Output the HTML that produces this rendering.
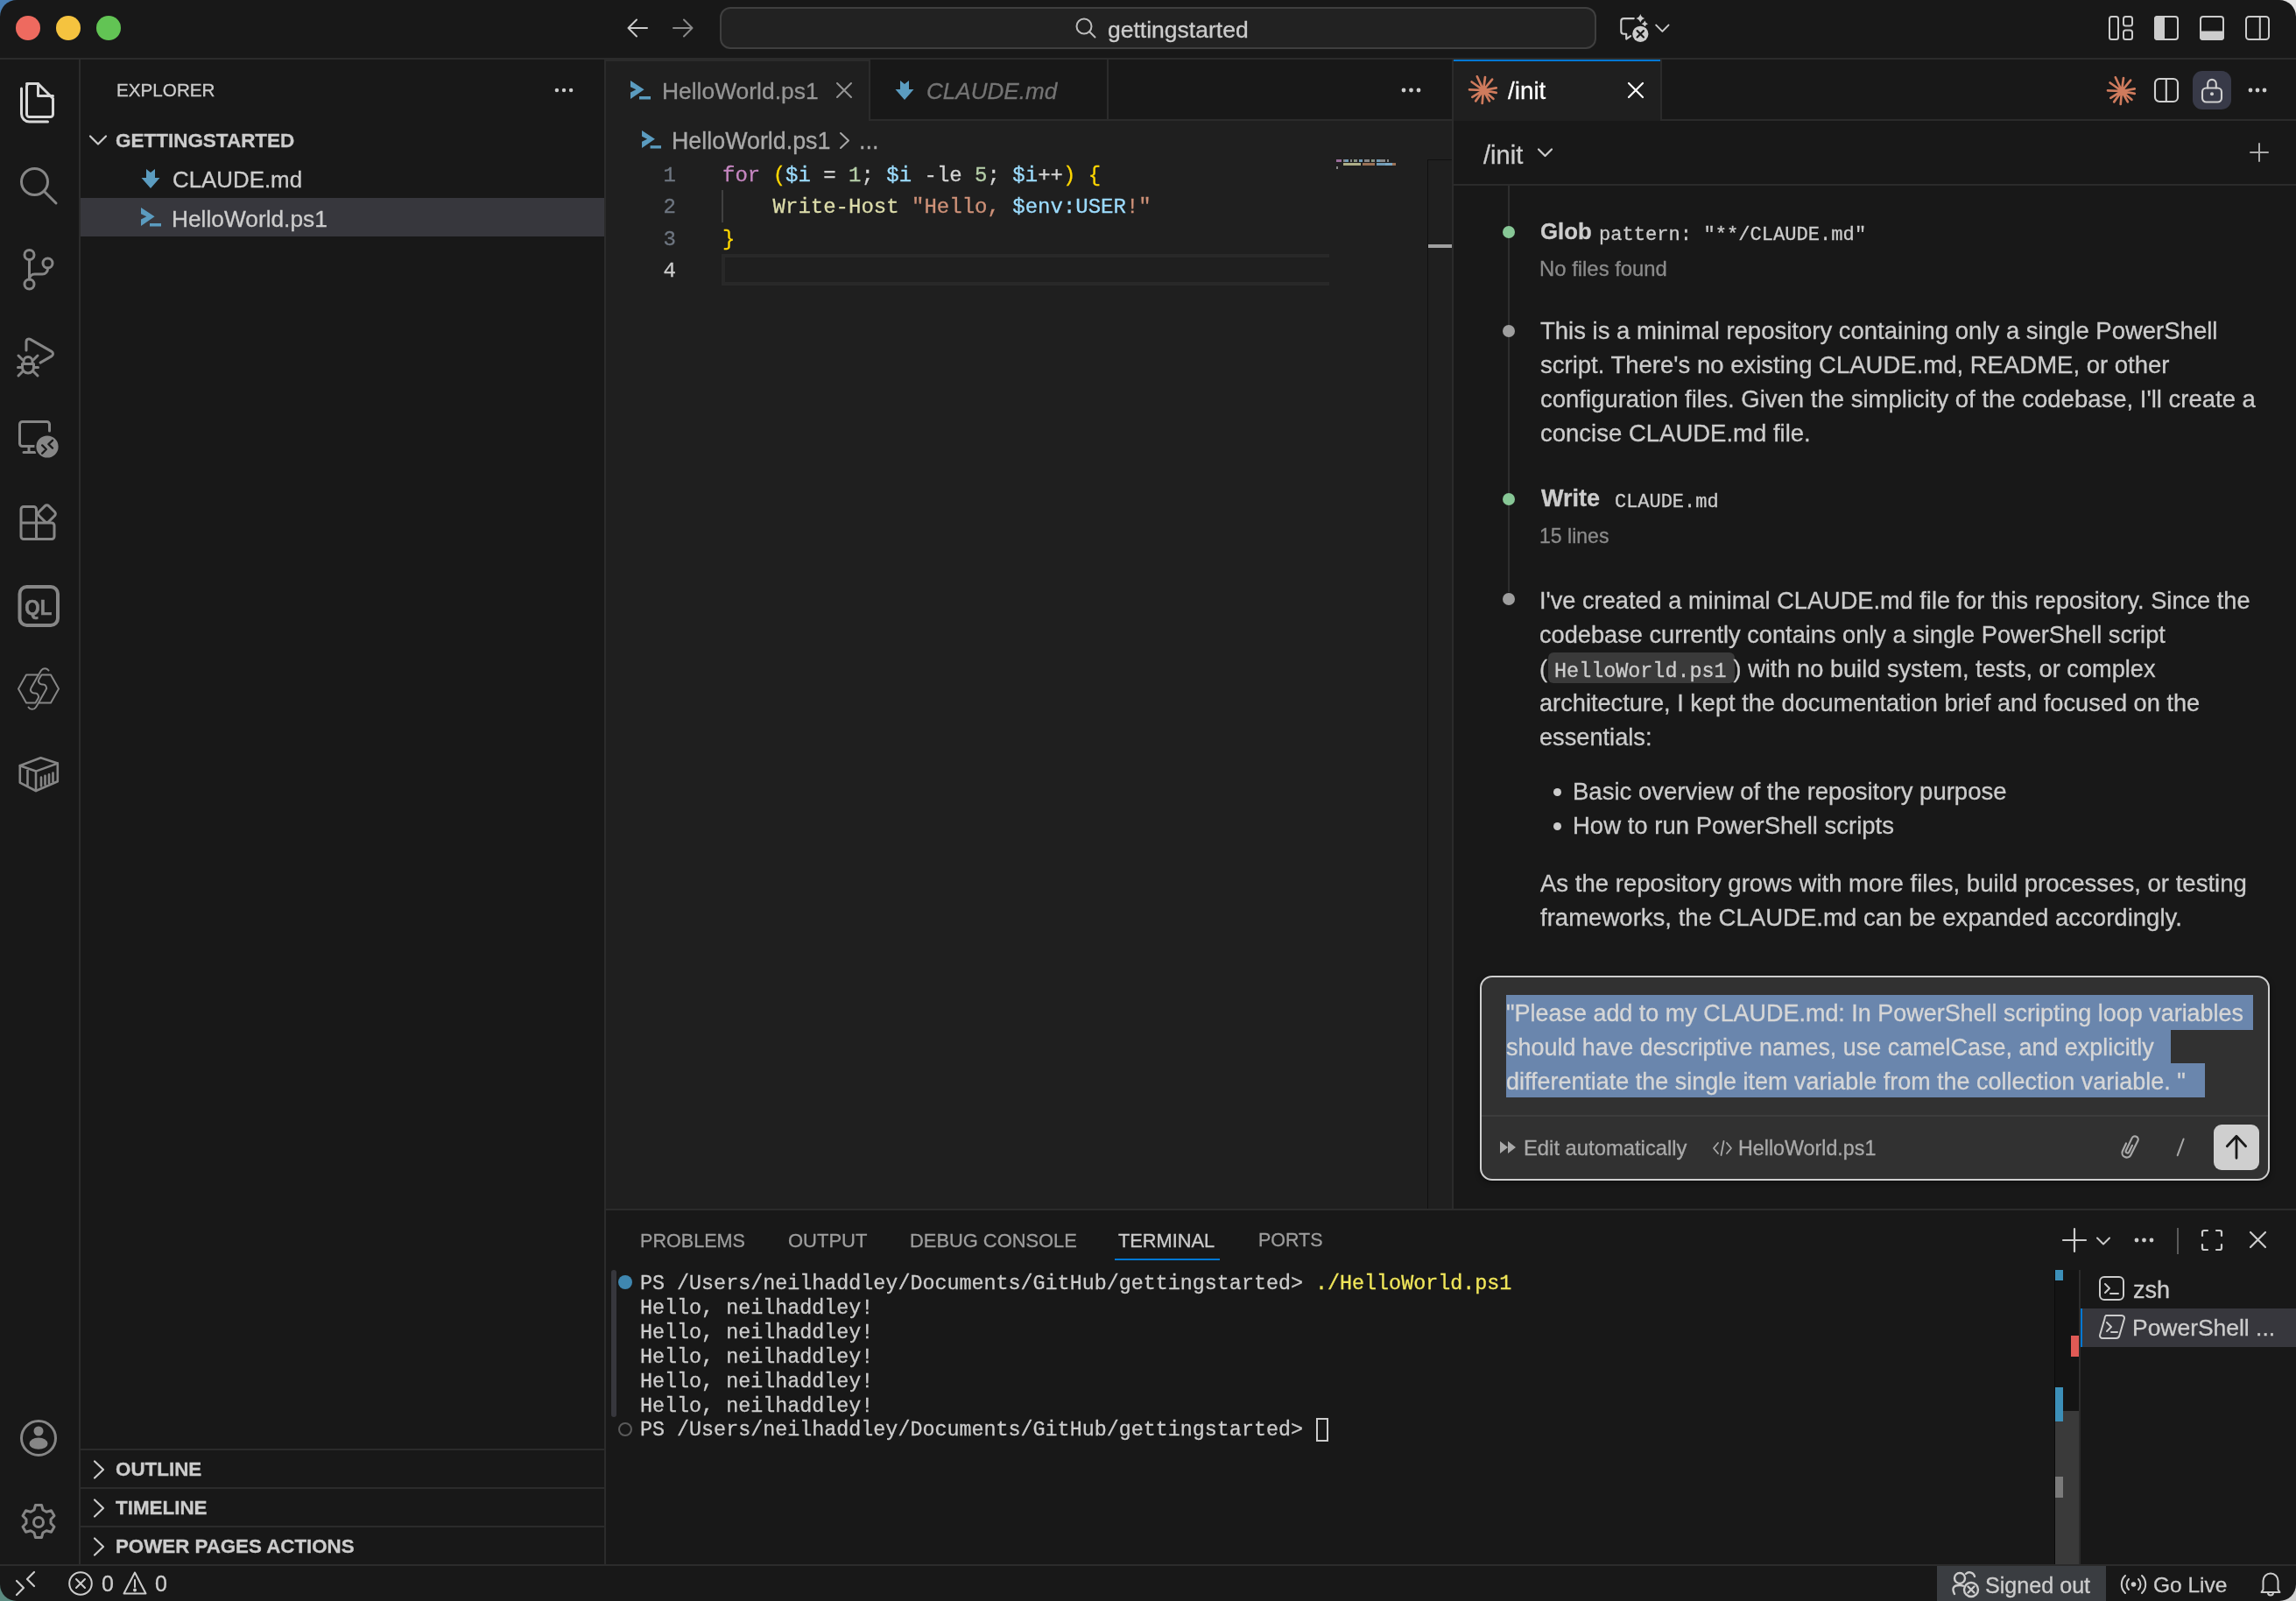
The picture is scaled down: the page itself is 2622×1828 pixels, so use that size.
<!DOCTYPE html>
<html><head><meta charset="utf-8">
<style>
*{box-sizing:border-box;margin:0;padding:0}
html,body{width:2622px;height:1828px;overflow:hidden;background:#181818}
body{position:relative;font-family:"Liberation Sans",sans-serif;color:#cccccc}
.t,#code,#term,#lnums{-webkit-text-stroke:0.3px currentColor;will-change:transform}
svg text{will-change:transform}
.a{position:absolute}
.mono{font-family:"Liberation Mono",monospace}
.t{position:absolute;white-space:pre;line-height:1}
svg.i{position:absolute;overflow:visible;fill:none;stroke-linecap:round;stroke-linejoin:round}
.b{position:absolute;background:#2b2b2b}
</style></head><body>
<!-- desktop corners -->
<div class="a" style="left:0;top:0;width:40px;height:40px;background:#4a7fb3"></div>
<div class="a" style="left:2582px;top:0;width:40px;height:40px;background:#e6e6e6"></div>
<div class="a" style="left:0;top:1788px;width:40px;height:40px;background:#5b8a80"></div>
<div class="a" style="left:2582px;top:1788px;width:40px;height:40px;background:#d2d2d2"></div>
<div class="a" style="left:0;top:0;width:2622px;height:1828px;background:#181818;border-radius:19px"></div>

<!-- ================= TITLE BAR ================= -->
<div class="b" style="left:0;top:66px;width:2622px;height:2px"></div>
<div class="a" style="left:18px;top:18px;width:28px;height:28px;border-radius:50%;background:#ee6a5f"></div>
<div class="a" style="left:64px;top:18px;width:28px;height:28px;border-radius:50%;background:#f5c33f"></div>
<div class="a" style="left:110px;top:18px;width:28px;height:28px;border-radius:50%;background:#62c454"></div>

<div id="title-icons">
<svg class="i" style="left:716px;top:21px" width="24" height="22" viewBox="0 0 24 22" stroke="#cccccc" stroke-width="2"><path d="M1.5 11H23M11 1.5L1.5 11L11 20.5"/></svg>
<svg class="i" style="left:768px;top:21px" width="24" height="22" viewBox="0 0 24 22" stroke="#8a8a8a" stroke-width="2"><path d="M22.5 11H1M13 1.5L22.5 11L13 20.5"/></svg>
</div>

<div class="a" style="left:822px;top:8px;width:1001px;height:48px;border:2px solid #3f3f3f;border-radius:12px;background:#222222"></div>
<svg class="i" style="left:1228px;top:20px" width="24" height="24" viewBox="0 0 24 24" stroke="#bdbdbd" stroke-width="2"><circle cx="10" cy="10" r="8.5"/><path d="M16.2 16.2L22.5 22.5"/></svg>
<div class="t" id="t-search" style="left:1265.0px;top:20.5px;font-size:26.53px;color:#cccccc">gettingstarted</div>

<!-- copilot icon -->
<svg class="i" style="left:1840px;top:8px" width="80" height="50" viewBox="0 0 80 50">
<path d="M25.8 13.1H14.3a3 3 0 0 0-3 3v11.6a3 3 0 0 0 3 3h2.9v5.9l5-3.4" stroke="#cccccc" stroke-width="2.1" fill="none" stroke-linecap="round" stroke-linejoin="round"/>
<path d="M33.3 7.9Q34.4 11.8 38.2 12.9Q34.4 14 33.3 17.8Q32.2 14 28.4 12.9Q32.2 11.8 33.3 7.9z" fill="#cccccc"/>
<path d="M38.3 15.6Q39.1 18.5 42 19.3Q39.1 20.1 38.3 23Q37.5 20.1 34.6 19.3Q37.5 18.5 38.3 15.6z" fill="#cccccc"/>
<circle cx="33.3" cy="30.8" r="10.4" fill="#181818"/>
<circle cx="33.3" cy="30.8" r="9.1" fill="#cccccc"/>
<path d="M29.6 27.1l7.4 7.4M37 27.1l-7.4 7.4" stroke="#181818" stroke-width="2.2" stroke-linecap="round"/>
<path d="M51.2 20.6l7.2 7.3 7.1-7.3" stroke="#cccccc" stroke-width="2" fill="none" stroke-linecap="round" stroke-linejoin="round"/>
</svg>
<!-- layout icons -->
<svg class="i" style="left:2408px;top:18px" width="28" height="28" viewBox="0 0 28 28" stroke="#cccccc" stroke-width="2"><rect x="1" y="1" width="10" height="26" rx="2.5"/><rect x="17" y="1" width="10" height="10.5" rx="2.5"/><rect x="17" y="16.5" width="10" height="10.5" rx="2.5"/></svg>
<svg class="i" style="left:2460px;top:18px" width="28" height="28" viewBox="0 0 28 28" stroke="#cccccc" stroke-width="2"><rect x="1" y="1" width="26" height="26" rx="3"/><path d="M4 0h8v28H4a4 4 0 0 1-4-4V4a4 4 0 0 1 4-4z" fill="#cccccc" stroke="none"/></svg>
<svg class="i" style="left:2512px;top:18px" width="28" height="28" viewBox="0 0 28 28" stroke="#cccccc" stroke-width="2"><rect x="1" y="1" width="26" height="26" rx="3"/><path d="M0 17.5h28v6.5a4 4 0 0 1-4 4H4a4 4 0 0 1-4-4z" fill="#cccccc" stroke="none"/></svg>
<svg class="i" style="left:2564px;top:18px" width="28" height="28" viewBox="0 0 28 28" stroke="#cccccc" stroke-width="2"><rect x="1" y="1" width="26" height="26" rx="3.5"/><path d="M16.8 1v26"/></svg>

<!-- ================= ACTIVITY BAR ================= -->
<div class="b" style="left:90px;top:68px;width:2px;height:1718px"></div>
<svg class="i" style="left:0;top:0" width="92" height="1786" viewBox="0 0 92 1786" stroke-width="3">
<g stroke="#d7d7d7">
<path d="M30.5 95.5h13l17 17v18a3 3 0 0 1-3 3h-24a3 3 0 0 1-3-3v-32a3 3 0 0 1 3-3z"/>
<path d="M43.5 95.5v14h17"/>
<path d="M24.5 101v29a9 9 0 0 0 9 9h21"/>
</g>
<g stroke="#868686">
<circle cx="39.5" cy="207.5" r="15"/><path d="M50.5 218.5l13.5 13.5"/>
<circle cx="33.5" cy="291" r="5.5"/><circle cx="54.5" cy="300.5" r="5.5"/><circle cx="33.5" cy="324.5" r="5.5"/>
<path d="M33.5 296.5v22.5M54.5 306v1a6 6 0 0 1-6 6h-9a6 6 0 0 0-6 6"/>
<path d="M30 400v-10a3 3 0 0 1 4.5-2.6l24.5 14a3 3 0 0 1 0 5.2l-13 7.5"/>
<path d="M27 412.5a5 5 0 0 1 10 0v3h-10zM25.5 415.5h13v4a6.5 6.5 0 0 1-13 0z"/>
<path d="M21 406l4.5 4.5M43 406l-4.5 4.5M20.5 419.5h5M38.5 419.5h5M21 429l4.5-4.5M43 429l-4.5-4.5"/>
<path d="M56.5 492v-7.5a3 3 0 0 0-3-3h-28a3 3 0 0 0-3 3v22a3 3 0 0 0 3 3h14M33 510v6.5M27 516.5h13"/>
<path d="M27 578.5h11.5a3 3 0 0 1 3 3v15.5h-17.5v-15.5a3 3 0 0 1 3-3zM24 597h35a3 3 0 0 1 3 3v12.5a3 3 0 0 1-3 3H27a3 3 0 0 1-3-3zM41.5 597v18.5"/>
<path d="M51.4 577.6a3 3 0 0 1 4.2 0l6.9 6.9a3 3 0 0 1 0 4.2l-6.9 6.9a3 3 0 0 1-4.2 0l-6.9-6.9a3 3 0 0 1 0-4.2z"/>
</g>
<circle cx="54" cy="510" r="13.6" fill="#868686" stroke="#181818" stroke-width="2"/>
<path d="M48.2 508.4l4.6 4.6-4.6 4.6M60 502.8l-4.6 4.4 4.6 4.4" stroke="#181818" stroke-width="2.3" fill="none"/>
<g stroke="#868686">
<rect x="22.5" y="670" width="43.5" height="44" rx="8" stroke-width="4"/>
</g>
<text x="43.8" y="702" text-anchor="middle" font-family="Liberation Sans" font-weight="bold" font-size="24.5" fill="#868686" stroke="#868686" stroke-width="0.6" textLength="31" lengthAdjust="spacingAndGlyphs">QL</text>
<g stroke="#868686" stroke-width="2">
<path d="M30 770.5h14l-8.5 15a4 4 0 0 0 3.5 6h1a4 4 0 0 1 3.5 6l-3 5H30l-9-16z"/>
<path d="M58 802.5H44l8.5-15a4 4 0 0 0-3.5-6h-1a4 4 0 0 1-3.5-6l3-5H58l9 16z"/>
<path d="M44 770.5l3-5a5 5 0 0 1 8.5 0M44 802.5l-3 5a5 5 0 0 1-8.5 0"/>
</g>
<g stroke="#868686" stroke-width="2.6">
<path d="M22.8 874.2L46.5 865.2L65.8 871.6V892.2L41 903L22.8 893.6Z"/>
<path d="M22.8 874.2L41 880.6L65.8 871.6M41 880.6V903M31.5 877.5V897.8M47 887.5V897.5M51.5 885.8V895.8M56 884.2V894.2M60.5 882.5V892.5"/>
</g>
<g stroke="#868686" stroke-width="3">
<circle cx="44" cy="1642" r="19.5"/>
</g>
<circle cx="44" cy="1634" r="5.5" fill="#868686"/>
<path d="M33.5 1648.5a10.5 7 0 0 1 21 0 10.5 6.2 0 0 1-21 0z" fill="#868686"/>
<g stroke="#868686" stroke-width="3">
<path d="M40.5 1718.5h7l1.5 5.5 4 2.3 5.5-1.5 3.5 6-4 4v4.4l4 4-3.5 6-5.5-1.5-4 2.3-1.5 5.5h-7l-1.5-5.5-4-2.3-5.5 1.5-3.5-6 4-4v-4.4l-4-4 3.5-6 5.5 1.5 4-2.3z"/>
<circle cx="44" cy="1738" r="5.5"/>
</g>
</svg>

<!-- ================= SIDEBAR ================= -->
<div class="b" style="left:690px;top:68px;width:2px;height:1718px"></div>
<div class="t" id="t-explorer" style="left:133.1px;top:92.8px;font-size:20.66px;color:#cccccc">EXPLORER</div>
<svg class="i" style="left:630px;top:99px" width="30" height="8" viewBox="0 0 30 8"><circle cx="5.9" cy="4" r="2.2" fill="#cccccc"/><circle cx="14" cy="4" r="2.2" fill="#cccccc"/><circle cx="22.1" cy="4" r="2.2" fill="#cccccc"/></svg>
<svg class="i" style="left:102px;top:154px" width="20" height="12" viewBox="0 0 20 12" stroke="#cccccc" stroke-width="2.2"><path d="M1 1.5l9 9 9-9"/></svg>
<div class="t" id="t-gs" style="left:132.0px;top:149.7px;font-size:22.47px;font-weight:bold;color:#cccccc">GETTINGSTARTED</div>
<svg class="i" style="left:161px;top:192px" width="22" height="24" viewBox="0 0 22 24"><path d="M6 1l5 4 5-4v10h5.5L11 23 .5 11H6z" fill="#5b9cc0"/></svg>
<div class="t" id="t-claude" style="left:196.8px;top:192.8px;font-size:25.86px;color:#cccccc">CLAUDE.md</div>
<div class="a" style="left:92px;top:226px;width:598px;height:44px;background:#37373d"></div>
<svg class="i" style="left:160.6px;top:236.8px" width="24" height="22" viewBox="0 0 24 22"><path d="M0 0L15.6 10.2L0 21V13.4L6.4 10.2L0 7.2Z" fill="#5b9cc0"/><rect x="10" y="18" width="13" height="3.5" fill="#5b9cc0"/></svg>
<div class="t" id="t-hw" style="left:196.4px;top:236.8px;font-size:26.3px;color:#cccccc">HelloWorld.ps1</div>

<div class="b" style="left:92px;top:1654px;width:598px;height:2px"></div>
<div class="b" style="left:92px;top:1698px;width:598px;height:2px"></div>
<div class="b" style="left:92px;top:1742px;width:598px;height:2px"></div>
<svg class="i" style="left:106px;top:1667px" width="14" height="22" viewBox="0 0 14 22" stroke="#cccccc" stroke-width="2.2"><path d="M2 1.5l10 9.5-10 9.5"/></svg>
<svg class="i" style="left:106px;top:1711px" width="14" height="22" viewBox="0 0 14 22" stroke="#cccccc" stroke-width="2.2"><path d="M2 1.5l10 9.5-10 9.5"/></svg>
<svg class="i" style="left:106px;top:1755px" width="14" height="22" viewBox="0 0 14 22" stroke="#cccccc" stroke-width="2.2"><path d="M2 1.5l10 9.5-10 9.5"/></svg>
<div class="t" id="t-outline" style="left:132px;top:1667px;font-size:22.4px;font-weight:bold">OUTLINE</div>
<div class="t" id="t-timeline" style="left:132px;top:1711px;font-size:22.4px;font-weight:bold">TIMELINE</div>
<div class="t" id="t-ppa" style="left:132px;top:1755px;font-size:22.3px;font-weight:bold">POWER PAGES ACTIONS</div>

<!-- ================= EDITOR ================= -->
<div class="a" style="left:692px;top:138px;width:966px;height:1242px;background:#1f1f1f"></div>
<!-- tabs -->
<div class="b" style="left:692px;top:136px;width:966px;height:2px"></div>
<div class="a" style="left:692px;top:68px;width:300px;height:70px;background:#1f1f1f;border-top:2px solid #2b2b2b"></div>
<div class="b" style="left:992px;top:68px;width:2px;height:68px"></div>
<div class="b" style="left:1264px;top:68px;width:2px;height:68px"></div>
<svg class="i" style="left:720px;top:92px" width="24" height="22" viewBox="0 0 24 22"><path d="M0 0L15.6 10.2L0 21V13.4L6.4 10.2L0 7.2Z" fill="#5b9cc0"/><rect x="10" y="18" width="13" height="3.5" fill="#5b9cc0"/></svg>
<div class="t" id="t-tab1" style="left:756.0px;top:90.7px;font-size:26.42px;color:#969696">HelloWorld.ps1</div>
<svg class="i" style="left:955px;top:94px" width="18" height="18" viewBox="0 0 18 18" stroke="#969696" stroke-width="2"><path d="M1 1l16 16M17 1L1 17"/></svg>
<svg class="i" style="left:1022px;top:91px" width="22" height="24" viewBox="0 0 22 24"><path d="M6 1l5 4 5-4v10h5.5L11 23 .5 11H6z" fill="#5b9cc0"/></svg>
<div class="t" id="t-tab2" style="left:1057.8px;top:91.4px;font-size:26.07px;font-style:italic;color:#747474">CLAUDE.md</div>
<svg class="i" style="left:1599px;top:99px" width="26" height="8" viewBox="0 0 26 8"><circle cx="4" cy="4" r="2.4" fill="#cccccc"/><circle cx="12.5" cy="4" r="2.4" fill="#cccccc"/><circle cx="21" cy="4" r="2.4" fill="#cccccc"/></svg>

<!-- breadcrumbs -->
<svg class="i" style="left:732.5px;top:148.5px" width="23" height="21" viewBox="0 0 24 22"><path d="M0 0L15.6 10.2L0 21V13.4L6.4 10.2L0 7.2Z" fill="#5b9cc0"/><rect x="10" y="18" width="13" height="3.5" fill="#5b9cc0"/></svg>
<div class="t" id="t-bc" style="left:766.9px;top:148.1px;font-size:26.84px;color:#a9a9a9">HelloWorld.ps1</div>
<svg class="i" style="left:959px;top:150.5px" width="11" height="19" viewBox="0 0 11 19" stroke="#a9a9a9" stroke-width="2"><path d="M1 1l9 8.5L1 18"/></svg>
<div class="t" style="left:981px;top:148px;font-size:27px;color:#a9a9a9">...</div>

<!-- code -->
<div class="a" style="left:824px;top:290px;width:694px;height:36px;border:4px solid #282828;border-right:none"></div>
<div class="a" style="left:824px;top:217px;width:2px;height:37px;background:#404040"></div>
<div class="mono" style="position:absolute;left:700px;top:183px;width:72px;text-align:right;font-size:24px;line-height:36.35px;color:#6e7681" id="lnums">1<br>2<br>3<br><span style="color:#cccccc">4</span></div>
<div class="mono" id="code" style="position:absolute;left:825px;top:183px;font-size:24px;line-height:36.35px;white-space:pre;color:#d4d4d4"><span style="color:#c586c0">for</span> <span style="color:#ffd700">(</span><span style="color:#9cdcfe">$i</span> = <span style="color:#b5cea8">1</span>; <span style="color:#9cdcfe">$i</span> -le <span style="color:#b5cea8">5</span>; <span style="color:#9cdcfe">$i</span>++<span style="color:#ffd700">)</span> <span style="color:#ffd700">{</span>
    <span style="color:#dcdcaa">Write-Host</span> <span style="color:#ce9178">"Hello, </span><span style="color:#9cdcfe">$env:USER</span><span style="color:#ce9178">!"</span>
<span style="color:#ffd700">}</span>
</div>
<!-- minimap -->
<div class="a" style="left:1526px;top:182px;width:6px;height:3px;background:#b07ab0;opacity:.85"></div>
<div class="a" style="left:1534px;top:182px;width:2px;height:3px;background:#9a9a9a;opacity:.85"></div>
<div class="a" style="left:1536px;top:182px;width:4px;height:3px;background:#7fb0d0;opacity:.85"></div>
<div class="a" style="left:1542px;top:182px;width:2px;height:3px;background:#9a9a9a;opacity:.85"></div>
<div class="a" style="left:1546px;top:182px;width:2px;height:3px;background:#9ab090;opacity:.85"></div>
<div class="a" style="left:1548px;top:182px;width:2px;height:3px;background:#9a9a9a;opacity:.85"></div>
<div class="a" style="left:1552px;top:182px;width:4px;height:3px;background:#7fb0d0;opacity:.85"></div>
<div class="a" style="left:1558px;top:182px;width:6px;height:3px;background:#9a9a9a;opacity:.85"></div>
<div class="a" style="left:1566px;top:182px;width:2px;height:3px;background:#9ab090;opacity:.85"></div>
<div class="a" style="left:1568px;top:182px;width:2px;height:3px;background:#9a9a9a;opacity:.85"></div>
<div class="a" style="left:1572px;top:182px;width:4px;height:3px;background:#7fb0d0;opacity:.85"></div>
<div class="a" style="left:1576px;top:182px;width:6px;height:3px;background:#9a9a9a;opacity:.85"></div>
<div class="a" style="left:1584px;top:182px;width:2px;height:3px;background:#9a9a9a;opacity:.85"></div>
<div class="a" style="left:1534px;top:186px;width:20px;height:3px;background:#c8c89a;opacity:.85"></div>
<div class="a" style="left:1556px;top:186px;width:14px;height:3px;background:#b08060;opacity:.85"></div>
<div class="a" style="left:1572px;top:186px;width:10px;height:3px;background:#7fb0d0;opacity:.85"></div>
<div class="a" style="left:1582px;top:186px;width:8px;height:3px;background:#8cc0e0;opacity:.85"></div>
<div class="a" style="left:1590px;top:186px;width:4px;height:3px;background:#b08060;opacity:.85"></div>
<div class="a" style="left:1526px;top:190px;width:2px;height:3px;background:#9a9a9a;opacity:.85"></div>
<!-- overview ruler -->
<div class="a" style="left:1630px;top:182px;width:1px;height:1198px;background:#101010"></div><div class="a" style="left:1630px;top:182px;width:28px;height:1px;background:#101010"></div>
<div class="a" style="left:1631px;top:279px;width:27px;height:4px;background:#a0a0a0"></div>


<!-- ================= CHAT ================= -->
<div class="b" style="left:1658px;top:68px;width:2px;height:1312px"></div>
<!-- chat tab bar -->
<div class="b" style="left:1660px;top:136px;width:962px;height:2px"></div>
<div class="a" style="left:1660px;top:68px;width:236px;height:70px;background:#1f1f1f;border-top:2px solid #0078d4"></div>
<div class="b" style="left:1896px;top:68px;width:2px;height:69px"></div>
<svg class="i" id="ast1" style="left:1678px;top:87px" width="32" height="32" viewBox="-16 -16 32 32"><g stroke="#cf7b5d" stroke-width="2.7" stroke-linecap="round"><path d="M0 0L-7.2 -15.7M0 0L2.0 -15.0M0 0L10.1 -12.4M0 0L-13.4 -9.5M0 0L14.7 -2.6M0 0L-16.0 -0.7M0 0L14.7 2.9M0 0L-12.7 7.8M0 0L11.4 9.8M0 0L-8.8 12.4M0 0L6.9 12.4M0 0L-1.3 15.0"/></g><circle cx="0" cy="0" r="4.2" fill="#cf7b5d"/></svg>
<div class="t" id="t-init" style="left:1721.9px;top:90.2px;font-size:27.87px;color:#ffffff">/init</div>
<svg class="i" style="left:1859px;top:94px" width="18" height="18" viewBox="0 0 18 18" stroke="#ffffff" stroke-width="2.2"><path d="M1 1l16 16M17 1L1 17"/></svg>

<svg class="i" style="left:2406.5px;top:87.5px" width="32" height="32" viewBox="-16 -16 32 32"><g stroke="#cf7b5d" stroke-width="2.7" stroke-linecap="round"><path d="M0 0L-7.2 -15.7M0 0L2.0 -15.0M0 0L10.1 -12.4M0 0L-13.4 -9.5M0 0L14.7 -2.6M0 0L-16.0 -0.7M0 0L14.7 2.9M0 0L-12.7 7.8M0 0L11.4 9.8M0 0L-8.8 12.4M0 0L6.9 12.4M0 0L-1.3 15.0"/></g><circle cx="0" cy="0" r="4.2" fill="#cf7b5d"/></svg>
<svg class="i" style="left:2460px;top:88.8px" width="28" height="28" viewBox="0 0 28 28" stroke="#d0d0d0" stroke-width="2.1"><rect x="1" y="1" width="26" height="26" rx="5"/><path d="M13.8 1v26"/></svg>
<div class="a" style="left:2504px;top:81px;width:44px;height:44px;border-radius:11px;background:#383a48"></div>
<svg class="i" style="left:2514px;top:88.8px" width="24" height="28" viewBox="0 0 24 28" stroke="#d0d0d0" stroke-width="2.1"><path d="M7.2 11.5V6.7a4.8 4.8 0 0 1 9.6 0v4.8"/><rect x="1" y="11.5" width="22" height="16" rx="4.5"/><circle cx="12" cy="18.3" r="2" fill="#d0d0d0" stroke="none"/></svg>
<svg class="i" style="left:2567px;top:100px" width="26" height="8" viewBox="0 0 26 8"><circle cx="3" cy="3" r="2.4" fill="#cccccc"/><circle cx="11" cy="3" r="2.4" fill="#cccccc"/><circle cx="19" cy="3" r="2.4" fill="#cccccc"/></svg>

<!-- chat header -->
<div class="b" style="left:1660px;top:210px;width:962px;height:2px"></div>
<div class="t" id="t-hinit" style="left:1694.2px;top:162.8px;font-size:29.07px;color:#cccccc">/init</div>
<svg class="i" style="left:1756px;top:169px" width="17" height="11" viewBox="0 0 17 11" stroke="#cccccc" stroke-width="2.2"><path d="M1 1.5l7.5 7.5 7.5-7.5"/></svg>
<svg class="i" style="left:2570px;top:164px" width="20" height="20" viewBox="0 0 20 20" stroke="#ababab" stroke-width="2"><path d="M10 0v20M0 10h20"/></svg>

<!-- timeline -->
<div class="a" style="left:1722px;top:212px;width:2px;height:464px;background:#2e2e2e"></div>
<div class="a" style="left:1716px;top:258px;width:14px;height:14px;border-radius:50%;background:#87c796"></div>
<div class="a" style="left:1716px;top:371px;width:14px;height:14px;border-radius:50%;background:#9e9e9e"></div>
<div class="a" style="left:1716px;top:563px;width:14px;height:14px;border-radius:50%;background:#87c796"></div>
<div class="a" style="left:1716px;top:677px;width:14px;height:14px;border-radius:50%;background:#9e9e9e"></div>

<div class="t" id="c-glob" style="left:1758.8px;top:252.3px;font-size:25.74px;font-weight:bold;color:#cccccc">Glob</div>
<div class="t mono" id="c-pat" style="left:1826.1px;top:257.9px;font-size:22.12px;color:#cccccc">pattern: "**/CLAUDE.md"</div>
<div class="t" id="c-nf" style="left:1758.0px;top:295.4px;font-size:23.86px;color:#8b8b8b">No files found</div>

<div class="t" id="c-p1" style="left:1759.0px;top:358.0px;font-size:27.51px;line-height:39px;color:#cccccc">This is a minimal repository containing only a single PowerShell
script. There's no existing CLAUDE.md, README, or other
configuration files. Given the simplicity of the codebase, I'll create a
concise CLAUDE.md file.</div>

<div class="t" id="c-write" style="left:1760.2px;top:556.0px;font-size:27.0px;font-weight:bold;color:#cccccc">Write</div>
<div class="t mono" id="c-wfile" style="left:1843.7px;top:563.1px;font-size:21.96px;color:#cccccc">CLAUDE.md</div>
<div class="t" id="c-15" style="left:1757.6px;top:601.1px;font-size:23.05px;color:#8b8b8b">15 lines</div>

<div class="a" style="left:1768px;top:744.5px;width:213px;height:35.5px;border-radius:6px;background:#3a3a3a"></div>
<div class="t" id="c-p2" style="left:1758.0px;top:665.9px;font-size:27.2px;line-height:39px;color:#cccccc">I've created a minimal CLAUDE.md file for this repository. Since the
codebase currently contains only a single PowerShell script
(<span class="mono" style="font-size:23.4px;padding:0 8px;line-height:0">HelloWorld.ps1</span>) with no build system, tests, or complex
architecture, I kept the documentation brief and focused on the
essentials:</div>
<div class="a" style="left:1773.6px;top:900px;width:9px;height:9px;border-radius:50%;background:#cccccc"></div>
<div class="a" style="left:1773.6px;top:939px;width:9px;height:9px;border-radius:50%;background:#cccccc"></div>
<div class="t" id="c-b1" style="left:1795.6px;top:884.4px;font-size:27.53px;line-height:39px;color:#cccccc">Basic overview of the repository purpose
How to run PowerShell scripts</div>
<div class="t" id="c-p3" style="left:1759.0px;top:989.4px;font-size:27.55px;line-height:39px;color:#cccccc">As the repository grows with more files, build processes, or testing
frameworks, the CLAUDE.md can be expanded accordingly.</div>

<!-- input box -->
<div class="a" style="left:1690px;top:1114px;width:902px;height:234px;border-radius:14px;background:#313131;border:2px solid #cfcfcf;box-shadow:0 2px 6px rgba(0,0,0,.45)"></div>
<div class="a" style="left:1692px;top:1273px;width:898px;height:1.5px;background:#3c3c3c"></div>
<div class="a" style="left:1720px;top:1136px;width:853px;height:40px;background:#6a86ad"></div>
<div class="a" style="left:1720px;top:1175px;width:759px;height:40px;background:#6a86ad"></div>
<div class="a" style="left:1720px;top:1214px;width:798px;height:39px;background:#6a86ad"></div>
<div class="t" id="c-inp" style="left:1719.6px;top:1138.4px;font-size:26.94px;line-height:39px;color:#d6d6d6">"Please add to my CLAUDE.md: In PowerShell scripting loop variables
should have descriptive names, use camelCase, and explicitly
differentiate the single item variable from the collection variable. "</div>
<svg class="i" style="left:1712px;top:1302px" width="22" height="16" viewBox="0 0 22 16"><path d="M1 1l9 7-9 7zM10 1l9 7-9 7z" fill="#a9a9a9"/></svg>
<div class="t" id="c-edit" style="left:1739.6px;top:1299px;font-size:23.8px;color:#a9a9a9">Edit automatically</div>
<svg class="i" style="left:1956px;top:1301px" width="22" height="20" viewBox="0 0 22 20" stroke="#a9a9a9" stroke-width="1.8"><path d="M6 4L1 10l5 6M16 4l5 6-5 6M12.5 2l-3 16"/></svg>
<div class="t" id="c-hw" style="left:1985.1px;top:1299.5px;font-size:23.28px;color:#a9a9a9">HelloWorld.ps1</div>
<svg class="i" style="left:2418px;top:1292px" width="30" height="34" viewBox="0 0 30 34" stroke="#a9a9a9" stroke-width="2.2"><path d="M10 13.5L5.8 22.5A5.2 5.2 0 0 0 15.3 26.7L23.4 10.6A3.7 3.7 0 0 0 16.7 7.4L9.8 21.8A1.9 1.9 0 0 0 13.3 23.4L17 15.8"/></svg>
<svg class="i" style="left:2484px;top:1298px" width="12" height="24" viewBox="0 0 12 24" stroke="#a9a9a9" stroke-width="2"><path d="M9.6 2.5L2.7 21.2"/></svg>
<div class="a" style="left:2528px;top:1284px;width:52px;height:52px;border-radius:9px;background:#cfcfcf"></div>
<svg class="i" style="left:2540px;top:1294px" width="28" height="32" viewBox="0 0 28 32" stroke="#1a1a1a" stroke-width="2.8"><path d="M14 28.3V3.5M3.3 14.8L14 3.3l10.6 11.5"/></svg>


<!-- ================= PANEL ================= -->
<div class="b" style="left:692px;top:1380px;width:1930px;height:2px"></div>
<div class="t" id="p-prob" style="left:731.0px;top:1405.7px;font-size:21.6px;color:#9d9d9d">PROBLEMS</div>
<div class="t" id="p-out" style="left:900.0px;top:1405.5px;font-size:22.01px;color:#9d9d9d">OUTPUT</div>
<div class="t" id="p-dbg" style="left:1039.0px;top:1405.6px;font-size:21.88px;color:#9d9d9d">DEBUG CONSOLE</div>
<div class="t" id="p-term" style="left:1277.4px;top:1405.6px;font-size:21.8px;color:#cccccc">TERMINAL</div>
<div class="t" id="p-ports" style="left:1436.8px;top:1405.7px;font-size:21.46px;color:#9d9d9d">PORTS</div>
<div class="a" style="left:1273px;top:1437px;width:120px;height:2px;background:#0078d4"></div>

<svg class="i" style="left:2356px;top:1403px" width="26" height="26" viewBox="0 0 26 26" stroke="#cccccc" stroke-width="2.2"><path d="M13 0v26M0 13h26"/></svg>
<svg class="i" style="left:2394px;top:1412px" width="16" height="10" viewBox="0 0 16 10" stroke="#cccccc" stroke-width="2"><path d="M1 1.5l7 7 7-7"/></svg>
<svg class="i" style="left:2437px;top:1413px" width="24" height="6" viewBox="0 0 24 6"><circle cx="3" cy="3" r="2.4" fill="#cccccc"/><circle cx="11.5" cy="3" r="2.4" fill="#cccccc"/><circle cx="20" cy="3" r="2.4" fill="#cccccc"/></svg>
<div class="a" style="left:2486px;top:1402px;width:2px;height:30px;background:#5a5a5a"></div>
<svg class="i" style="left:2514px;top:1404px" width="24" height="24" viewBox="0 0 24 24" stroke="#cccccc" stroke-width="2.2"><path d="M1 7V3a2 2 0 0 1 2-2h4M17 1h4a2 2 0 0 1 2 2v4M23 17v4a2 2 0 0 1-2 2h-4M7 23H3a2 2 0 0 1-2-2v-4"/></svg>
<svg class="i" style="left:2569px;top:1406px" width="19" height="19" viewBox="0 0 19 19" stroke="#cccccc" stroke-width="2.2"><path d="M1 1l17 17M18 1L1 18"/></svg>

<!-- terminal -->
<div class="a" style="left:698px;top:1450px;width:6px;height:168px;border-radius:3px;background:#37373d"></div>
<div class="a" style="left:706px;top:1456px;width:16px;height:16px;border-radius:50%;background:#3f87b0"></div>
<div class="a" style="left:706px;top:1624px;width:16px;height:16px;border-radius:50%;border:2.5px solid #5a5a5a"></div>
<div class="mono" id="term" style="position:absolute;left:731.0px;top:1453.4px;font-size:23.37px;line-height:27.9px;white-space:pre;color:#cccccc">PS /Users/neilhaddley/Documents/GitHub/gettingstarted> <span style="color:#f0e65a">./HelloWorld.ps1</span>
Hello, neilhaddley!
Hello, neilhaddley!
Hello, neilhaddley!
Hello, neilhaddley!
Hello, neilhaddley!
PS /Users/neilhaddley/Documents/GitHub/gettingstarted> </div>
<div class="a" style="left:1503px;top:1619px;width:14px;height:27px;border:2px solid #cccccc"></div>

<!-- terminal overview ruler / scrollbar -->
<div class="a" style="left:2346px;top:1450px;width:28px;height:336px;background:#141414;border-left:1px solid #0a0a0a"></div>
<div class="a" style="left:2347px;top:1611px;width:27px;height:175px;background:#3a3a3a"></div>
<div class="a" style="left:2347px;top:1450px;width:9px;height:12px;background:#3c8fb8"></div>
<div class="a" style="left:2365px;top:1525px;width:9px;height:24px;background:#e05a55"></div>
<div class="a" style="left:2347px;top:1584px;width:9px;height:39px;background:#3c8fb8"></div>
<div class="a" style="left:2347px;top:1686px;width:9px;height:24px;background:#7a7a7a"></div>
<div class="a" style="left:2374px;top:1450px;width:2px;height:336px;background:#2b2b2b"></div>

<!-- terminal tabs -->
<svg class="i" style="left:2397px;top:1457px" width="29" height="28" viewBox="0 0 29 28" stroke="#cccccc" stroke-width="2"><rect x="1" y="1" width="27" height="26" rx="5"/><path d="M7 9l5 5-5 5M13 20h9"/></svg>
<div class="t" id="tt-zsh" style="left:2435.5px;top:1459px;font-size:27.11px;color:#cccccc">zsh</div>
<div class="a" style="left:2376px;top:1494px;width:246px;height:44px;background:#37373d"></div>
<div class="a" style="left:2376px;top:1494px;width:2px;height:44px;background:#0078d4"></div>
<svg class="i" style="left:2397px;top:1501px" width="30" height="28" viewBox="0 0 30 28" stroke="#cccccc" stroke-width="2"><path d="M8 1h18a3 3 0 0 1 2.9 3.8l-5.5 19A4 4 0 0 1 19.5 27H4a3 3 0 0 1-2.9-3.8l5.5-19A4 4 0 0 1 8 1z"/><path d="M9 9l5 5-5 5M14 20h7"/></svg>
<div class="t" id="tt-ps" style="left:2434.5px;top:1503.3px;font-size:26.44px;color:#cccccc">PowerShell ...</div>


<!-- ================= STATUS BAR ================= -->
<div class="b" style="left:0;top:1786px;width:2622px;height:2px"></div>
<svg class="i" style="left:18px;top:1794.5px" width="22" height="26" viewBox="0 0 22 26" stroke="#cccccc" stroke-width="2.2"><path d="M1 10l8 8-8 8M21 0l-8 8 8 8"/></svg>
<svg class="i" style="left:78px;top:1794px" width="28" height="28" viewBox="0 0 28 28" stroke="#cccccc" stroke-width="2"><circle cx="14" cy="14" r="12.8"/><path d="M9 9l10 10M19 9L9 19"/></svg>
<div class="t" id="s-e0" style="left:115.5px;top:1796.4px;font-size:25px;color:#cccccc">0</div>
<svg class="i" style="left:139.5px;top:1793.6px" width="28" height="27" viewBox="0 0 28 27" stroke="#cccccc" stroke-width="2"><path d="M14 1.5L1.5 25.5h25z"/><path d="M14 10v8" /><circle cx="14" cy="21.5" r="1" fill="#cccccc"/></svg>
<div class="t" id="s-w0" style="left:176.5px;top:1796.4px;font-size:25px;color:#cccccc">0</div>

<div class="a" style="left:2212px;top:1788px;width:193px;height:40px;background:#3a3d41"></div>
<svg class="i" style="left:2228px;top:1794px" width="32" height="30" viewBox="0 0 32 30" stroke="#cccccc" stroke-width="2.4"><circle cx="10" cy="8" r="6"/><path d="M4 26c-3-6-2-10 6-10 2 0 3 .3 4 .8"/><path d="M17 3a6 6 0 0 1 10 3"/><circle cx="23" cy="21" r="8" fill="#3a3d41"/><path d="M19.5 17.5l7 7M26.5 17.5l-7 7"/></svg>
<div class="t" id="s-so" style="left:2267.4px;top:1797.6px;font-size:25.11px;color:#cccccc">Signed out</div>
<svg class="i" style="left:2422px;top:1797px" width="29" height="24" viewBox="0 0 29 24" stroke="#cccccc" stroke-width="2"><path d="M5 2a14 14 0 0 0 0 20M24 2a14 14 0 0 1 0 20M9 6a8.5 8.5 0 0 0 0 12M20 6a8.5 8.5 0 0 1 0 12"/><circle cx="14.5" cy="12" r="1.8" fill="#cccccc"/></svg>
<div class="t" id="s-gl" style="left:2459.0px;top:1797.7px;font-size:24.47px;color:#cccccc">Go Live</div>
<svg class="i" style="left:2581px;top:1794px" width="24" height="28" viewBox="0 0 24 28" stroke="#cccccc" stroke-width="2"><path d="M3.5 21V11a8.5 8.5 0 0 1 17 0v10l2 3H1.5z"/><path d="M9 24.5a3 3 0 0 0 6 0"/></svg>

</body></html>
